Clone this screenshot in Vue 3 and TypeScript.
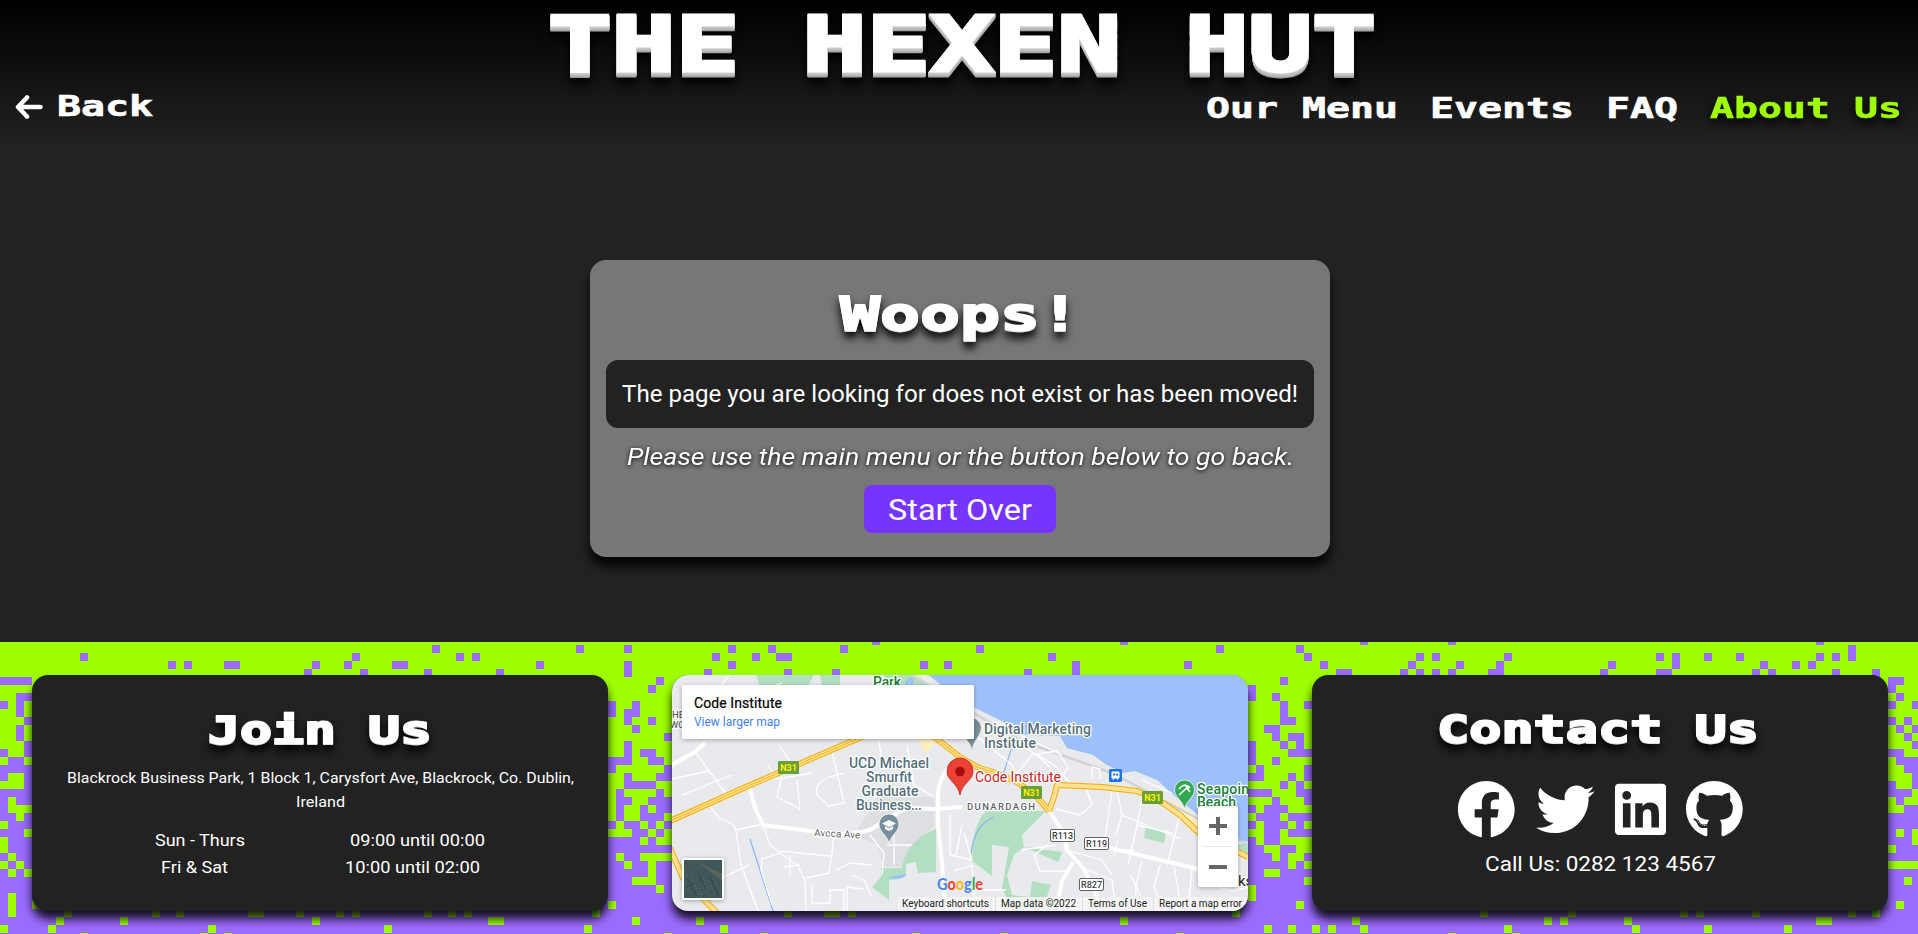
<script setup lang="ts">
import { h, type FunctionalComponent } from 'vue'

interface FitProps {
  text: string
  w: number
  size: number
  line: number
  base: number
}

// One line of text fitted to a fixed advance width.
const FitText: FunctionalComponent<FitProps> = (props) =>
  h('svg', { width: props.w, height: props.line, overflow: 'visible' }, [
    h(
      'text',
      {
        x: 0,
        y: props.base,
        'font-size': props.size,
        textLength: props.w,
        lengthAdjust: 'spacingAndGlyphs',
        'xml:space': 'preserve',
      },
      props.text,
    ),
  ])
FitText.props = ['text', 'w', 'size', 'line', 'base']

const nav = [
  { label: 'Our Menu', active: false },
  { label: 'Events', active: false },
  { label: 'FAQ', active: false },
  { label: 'About Us', active: true },
]

const CELL = 8

interface Cell {
  x: number
  y: number
  lime: boolean
}

const cells: Cell[] = []

function put(row: number, x: number, lime: boolean) {
  cells.push({ x, y: row * CELL - 5, lime })
}

// Scattered single cells along the top (violet) and the bottom (lime).
const top: Record<number, number[]> = {
  0: [872, 1120, 1360, 1448, 1816],
  1: [432, 576, 624, 728, 768, 840, 976, 1216, 1296, 1848],
  2: [80, 352, 456, 472, 712, 752, 776, 784, 1048, 1304, 1416, 1432, 1504, 1656, 1672, 1704, 1736, 1816, 1832, 1848],
  3: [168, 184, 224, 232, 312, 344, 392, 400, 536, 624, 728, 920, 944, 1072, 1184, 1320, 1408, 1456, 1496, 1608, 1672, 1760, 1792, 1808],
  4: [304, 360, 424, 496, 624, 704, 784, 832, 1024, 1072, 1336, 1344, 1400, 1416, 1432, 1448, 1488, 1496, 1600, 1656, 1664, 1752, 1768, 1832, 1872],
}
const bottom: Record<number, number[]> = {
  33: [32],
  34: [64, 152, 176, 248, 256, 296, 336, 352, 424, 448, 464, 592, 784, 824, 832, 848, 1232, 1480, 1568, 1680, 1696, 1752, 1848, 1872],
  35: [56, 120, 312, 488, 496, 632, 696, 1120, 1352, 1544, 1560, 1624, 1816, 1824],
  36: [48, 208, 384, 584, 720, 1312, 1328, 1360, 1504, 1632, 1704, 1784],
  37: [80, 200, 224, 664, 760, 912, 1000, 1176, 1448, 1512],
}
for (const [r, xs] of Object.entries(top)) xs.forEach((x) => put(+r, x, false))
for (const [r, xs] of Object.entries(bottom)) xs.forEach((x) => put(+r, x, true))

// Dense strips between the cards: '#' violet, '.' lime, first row is row 5.
const strips: { x: number; rows: string[] }[] = [
  {
    x: 0,
    rows: [
      '####', '....', '..##', '#.#.', '..#.', '...#', '..#.', '..#.', '...#', '#..#',
      '.##.', '####', '#..#', '...#', '####', '#.##', '#...', '##.#', '.###', '###.',
      '.###', '.###', '#.##', '.#.#', '#.#.', '####', '####', '#.##', '#.##', '#.##',
      '####', '.###', '####',
    ],
  },
  {
    x: 608,
    rows: [
      '......#.', '.....#..', '........', '#..#....', '#.##....', '..#..#..', '...#....', '.......#', '..#.....', '..#.##..',
      '###..##.', '#......#', '..#...##', '..####..', '.#....#.', '.##..###', '.#..#.##', '.#..###.', '#.##.#.#', '...##.#.',
      '####.#..', '########', '#.##....', '##.##.##', '#####.##', '###...##', '######.#', '########', '.#######', '########',
      '###.####', '########', '#######.',
    ],
  },
  {
    x: 1248,
    rows: [
      '....#...', '#.......', '#..#....', '....#..#', '....#...', '....##..', '..##....', '...#.##.', '#...#.#.', '#....###',
      '#..#....', '.#.....#', '##...#.#', '....#.#.', '###...##', '...#...#', '#.###...', '.###.###', '#.###.#.', '..##.###',
      '#.##....', '##..##..', '###.#..#', '#####.#.', '##..####', '#######.', '.#######', '.#######', '######.#', '########',
      '########', '##.##.##', '########',
    ],
  },
  {
    x: 1888,
    rows: [
      '##..', '#...', '.#..', '#..#', '....', '#.#.', '.#.#', '..#.', '...#', '##..',
      '.###', '..##', '...#', '#..#', '###.', '.#..', '..##', '####', '####', '#.#.',
      '###.', '.###', '####', '....', '####', '##.#', '####', '####', '#.##', '####',
      '####', '####', '####',
    ],
  },
]
for (const strip of strips) {
  strip.rows.forEach((row, r) => {
    ;[...row].forEach((ch, c) => put(r + 5, strip.x + c * CELL, ch === '.'))
  })
}

const hours = [
  { days: 'Sun - Thurs', dw: 90, time: '09:00 until 00:00', tw: 135 },
  { days: 'Fri & Sat', dw: 67, time: '10:00 until 02:00', tw: 135 },
]

const socials = [
  {
    name: 'Facebook',
    box: 512,
    d: 'M504 256C504 119 393 8 256 8S8 119 8 256c0 123.78 90.69 226.38 209.25 245V327.69h-63V256h63v-54.64c0-62.15 37-96.48 93.67-96.48 27.14 0 55.52 4.84 55.52 4.84v61h-31.28c-30.8 0-40.41 19.12-40.41 38.73V256h68.78l-11 71.69h-57.78V501C413.31 482.38 504 379.78 504 256z',
  },
  {
    name: 'Twitter',
    box: 512,
    d: 'M459.37 151.716c.325 4.548.325 9.097.325 13.645 0 138.72-105.583 298.558-298.558 298.558-59.452 0-114.68-17.219-161.137-47.106 8.447.974 16.568 1.299 25.34 1.299 49.055 0 94.213-16.568 130.274-44.832-46.132-.975-84.792-31.188-98.112-72.772 6.498.974 12.995 1.624 19.818 1.624 9.421 0 18.843-1.3 27.614-3.573-48.081-9.747-84.143-51.98-84.143-102.985v-1.299c13.969 7.797 30.214 12.67 47.431 13.319-28.264-18.843-46.781-51.005-46.781-87.391 0-19.492 5.197-37.36 14.294-52.954 51.655 63.675 129.3 105.258 216.365 109.807-1.624-7.797-2.599-15.918-2.599-24.04 0-57.828 46.782-104.934 104.934-104.934 30.213 0 57.502 12.67 76.67 33.137 23.715-4.548 46.456-13.32 66.599-25.34-7.798 24.366-24.366 44.833-46.132 57.827 21.117-2.273 41.584-8.122 60.426-16.243-14.292 20.791-32.161 39.308-52.628 54.253z',
  },
  {
    name: 'LinkedIn',
    box: 448,
    d: 'M416 32H31.9C14.3 32 0 46.5 0 64.3v383.4C0 465.5 14.3 480 31.9 480H416c17.6 0 32-14.5 32-32.3V64.3c0-17.8-14.4-32.3-32-32.3zM135.4 416H69V202.2h66.5V416zm-33.2-243c-21.3 0-38.5-17.3-38.5-38.5S80.9 96 102.2 96c21.2 0 38.5 17.3 38.5 38.5 0 21.3-17.2 38.5-38.5 38.5zm282.1 243h-66.4V312c0-24.8-.5-56.7-34.5-56.7-34.6 0-39.9 27-39.9 54.9V416h-66.4V202.2h63.7v29.2h.9c8.9-16.8 30.6-34.5 62.9-34.5 67.2 0 79.7 44.3 79.7 101.9V416z',
  },
  {
    name: 'GitHub',
    box: 496,
    d: 'M165.9 397.4c0 2-2.3 3.6-5.2 3.6-3.3.3-5.6-1.3-5.6-3.6 0-2 2.3-3.6 5.2-3.6 3-.3 5.6 1.3 5.6 3.6zm-31.1-4.5c-.7 2 1.3 4.3 4.3 4.9 2.6 1 5.6 0 6.2-2s-1.3-4.3-4.3-5.2c-2.6-.7-5.5.3-6.2 2.3zm44.2-1.7c-2.9.7-4.9 2.6-4.6 4.9.3 2 2.9 3.3 5.9 2.6 2.9-.7 4.9-2.6 4.6-4.6-.3-1.9-3-3.2-5.9-2.9zM244.8 8C106.1 8 0 113.3 0 252c0 110.9 69.8 205.8 169.5 239.2 12.8 2.3 17.3-5.6 17.3-12.1 0-6.2-.3-40.4-.3-61.4 0 0-70 15-84.7-29.8 0 0-11.4-29.1-27.8-36.6 0 0-22.9-15.7 1.6-15.4 0 0 24.9 2 38.6 25.8 21.9 38.6 58.6 27.5 72.9 20.9 2.3-16 8.8-27.1 16-33.7-55.9-6.2-112.3-14.3-112.3-110.5 0-27.5 7.6-41.3 23.6-58.9-2.6-6.5-11.1-33.3 2.6-67.9 20.9-6.5 69 27 69 27 20-5.6 41.5-8.5 62.8-8.5s42.8 2.9 62.8 8.5c0 0 48.1-33.6 69-27 13.7 34.7 5.2 61.4 2.6 67.9 16 17.7 25.8 31.5 25.8 58.9 0 96.5-58.9 104.2-114.8 110.5 9.2 7.9 17 22.9 17 46.4 0 33.7-.3 75.4-.3 83.6 0 6.5 4.6 14.4 17.3 12.1C428.2 457.8 496 362.9 496 252 496 113.3 383.5 8 244.8 8zM97.2 352.9c-1.3 1-1 3.3.7 5.2 1.6 1.6 3.9 2.3 5.2 1 1.3-1 1-3.3-.7-5.2-1.6-1.6-3.9-2.3-5.2-1zm-10.8-8.1c-.7 1.3.3 2.9 2.3 3.9 1.6 1 3.6.7 4.3-.7.7-1.3-.3-2.9-2.3-3.9-2-.6-3.6-.3-4.3.7zm32.4 35.6c-1.6 1.3-1 4.3 1.3 6.2 2.3 2.3 5.2 2.6 6.5 1 1.3-1.3.7-4.3-1.3-6.2-2.2-2.3-5.2-2.6-6.5-1zm-11.4-14.7c-1.6 1-1.6 3.6 0 5.9 1.6 2.3 4.3 3.3 5.6 2.3 1.6-1.3 1.6-3.9 0-6.2-1.4-2.3-4-3.3-5.6-2z',
  },
]

const trunkRoads = [
  'M-2 146L76 111L185 64L220 50L250 54L265 64L288 82L305 92L321 97L345 107L365 122L377 136',
  'M377 136L382 122L385 110L430 112L465 116L491 128L508 140L526 157L576 182',
  'M-2 173L11 203L45 238',
]
const mainRoads = [
  'M77 110L83 133L91 150L138 156L168 159L190 157L200 154L218 142L235 133L265 134L290 132',
  'M288 80Q266 100 266 120V150Q271 190 273 238',
  'M-2 91L23 77L33 68',
  'M378 137L391 157L395 175L411 193L423 215L427 238',
  'M401 187L390 206L386 226',
  'M438 173L526 194L576 205',
]
const minorRoads = [
  'M23 77L55 120', 'M33 125L47 143L62 150L64 155L91 149', 'M64 155L69 190L86 236',
  'M91 150L98 170L108 178L125 190L133 205L134 236', 'M108 176L158 181', 'M162 158L160 178L157 198L134 203',
  'M52 202L77 190', 'M57 0L48 12', 'M108 178L90 184L89 195L100 230', 'M160 76L172 128L157 131L145 120Q142 108 157 102L172 98',
  'M107 70L120 90', 'M125 105L128 134L105 122L110 100', 'M207 66L210 88', 'M235 70L242 110L262 122',
  'M118 180V200M112 192L128 190', 'M140 210V228H158V215H172V236', 'M165 195L178 188L200 190', 'M175 236V212L192 214',
  'M180 200L192 205L200 222', 'M198 160L212 178L210 200', 'M222 150V190M215 170H240', 'M278 140V180L300 185L292 158',
  'M303 60L340 90L350 108', 'M312 52L352 72L382 90L398 108', 'M345 98L360 80L385 76L396 92L388 106', 'M340 56L390 80',
  'M362 78L378 92', 'M440 114L432 172', 'M414 113L420 130L408 140L384 134', 'M445 116L450 140L444 160',
  'M471 118L465 150L456 190', 'M450 140L508 164', 'M508 140L495 190', 'M465 150L500 158', 'M446 165L442 180M450 175H462',
  'M470 186L464 210L474 236', 'M488 190L482 212L492 236', 'M458 200Q470 215 458 236', 'M502 192L510 236', 'M520 194L516 236',
  'M395 175L430 185L440 200', 'M411 193L440 205L444 236', 'M350 175L384 170', 'M290 150L284 180', 'M282 196L300 190L302 224',
  'M300 215H334', 'M420 104V92L428 94V104', 'M376 170L362 180L368 196L398 196', 'M526 206L560 216L576 212', 'M470 105L500 118',
  'M60 12L90 16L110 8', 'M0 104L36 96M10 120L60 100', 'M96 90L105 104L140 98',
]
const badges = [
  { x: 106, y: 86, t: 'N31' },
  { x: 349, y: 111, t: 'N31' },
  { x: 470, y: 116, t: 'N31' },
]
const regional = [
  { x: 378, y: 154, t: 'R113' },
  { x: 412, y: 162, t: 'R119' },
  { x: 407, y: 203, t: 'R827' },
]
</script>

<template>
  <div class="page">
    <header class="header">
      <h1 class="title"><FitText class="px px-title" text="THE HEXEN HUT" :w="828" :size="76" :line="80" :base="70.500" /></h1>
      <div class="bar">
        <a class="back">
          <svg width="30" height="26" viewBox="0 0 30 26"><path d="M12 3.5L3 13L12 22.5M3.500 13H25.500" /></svg>
          <FitText class="px" text="Back" :w="96" :size="27.500" :line="28" :base="22" />
        </a>
        <nav class="nav">
          <FitText
            v-for="item in nav"
            :key="item.label"
            class="px px-nav"
            :class="{ active: item.active }"
            :text="item.label"
            :w="item.label.length * 24"
            :size="27.500"
            :line="28"
            :base="22"
          />
        </nav>
      </div>
    </header>

    <main class="main">
      <section class="notice">
        <FitText class="px px-head woops" text="Woops!" :w="240" :size="46" :line="52" :base="39.500" />
        <div class="message">
          <FitText text="The page you are looking for does not exist or has been moved!" :w="676" :size="23.500" :line="36" :base="26" />
        </div>
        <FitText class="hint" text="Please use the main menu or the button below to go back." :w="667" :size="24.500" :line="36" :base="26" />
        <button class="button"><FitText text="Start Over" :w="144" :size="29.500" :line="36" :base="29" /></button>
      </section>
    </main>

    <footer class="footer">
      <svg class="pixels" width="1918" height="292" shape-rendering="crispEdges">
        <rect width="1918" height="292" fill="#9fff00" />
        <rect y="187" width="1918" height="105" fill="#9b6bff" />
        <rect v-for="(c, i) in cells" :key="i" :x="c.x" :y="c.y" width="8" height="8" :fill="c.lime ? '#9fff00' : '#9b6bff'" />
      </svg>

      <section class="card join">
        <FitText class="px px-head" text="Join Us" :w="224" :size="37" :line="40" :base="33.500" />
        <div class="address">
          <FitText text="Blackrock Business Park, 1 Block 1, Carysfort Ave, Blackrock, Co. Dublin," :w="507" :size="15" :line="24" :base="17" />
          <FitText text="Ireland" :w="49" :size="15" :line="24" :base="17" />
        </div>
        <div class="hours">
          <div v-for="row in hours" :key="row.days" class="hour-row">
            <FitText :text="row.days" :w="row.dw" :size="17" :line="27" :base="19" />
            <FitText :text="row.time" :w="row.tw" :size="17" :line="27" :base="19" />
          </div>
        </div>
      </section>

      <section class="card map">
        <svg width="576" height="236" viewBox="0 0 576 236">
          <rect width="576" height="236" fill="#e8eaed" />
          <path d="M206 122H262V150L232 192L212 192L205 170L182 160Z" fill="#dedfe3" />
          <path d="M84 0H142L136 11H88ZM148 0H168V10H150ZM212 0H242L276 22L250 12L215 12Z" fill="#b2dfc1" />
          <path d="M245 64H266L254 79ZM272 44L312 50L300 72Z" fill="#feefc3" />
          <path d="M255 -1C275 14 288 26 303 33L338 50L350 60L388 61L395 73L421 80L435 90L451 98L463 96L485 105L505 123L526 140L555 163L577 167V-1Z" fill="#9cc0f9" />
          <path d="M236 13Q232 5 240 4Q240 11 236 13" fill="none" stroke="#9cc0f9" stroke-width="3" />
          <path d="M264 154V197L246 198L244 187L234 189V199L228 204L217 205V225L200 212L209 202V193H230Q234 166 264 154Z" fill="#b2dfc1" />
          <path d="M314 136L374 136L350 160L352 172L390 177L386 187L352 172L342 180L335 200L340 220L358 222L360 206L379 210L374 224L388 227V236H342L330 214L337 172L320 170V201L300 186Q300 150 314 136Z" fill="#b2dfc1" />
          <path d="M474 150L494 156L492 168L472 163ZM560 169H576V184L564 177Z" fill="#b2dfc1" />
          <path d="M498 124L532 146L528 156L512 142Z" fill="#feefc3" />
          <path d="M78 164L101 236M344 50L339 75L331 100M322 142Q302 150 299 179M217 203L234 200" fill="none" stroke="#8ab4f8" stroke-width="1.200" />
          <path d="M218 203Q226 198 234 201Q228 205 218 203Z" fill="#9cc0f9" />
          <path d="M240 0L300 37L350 66L440 98L500 130L576 170" fill="none" stroke="#d0d2d6" stroke-width="2.500" />
          <path v-for="d in minorRoads" :key="d" :d="d" class="minor" />
          <path v-for="d in mainRoads" :key="d" :d="d" class="major" />
          <path v-for="d in trunkRoads" :key="d" :d="d" class="trunk-edge" />
          <path v-for="d in trunkRoads" :key="d" :d="d" class="trunk" />
          <path :d="trunkRoads[0]" class="trunk-line" />

          <g v-for="b in badges" :key="b.x">
            <rect :x="b.x" :y="b.y" width="21" height="13" rx="1.500" fill="#689f38" />
            <text :x="b.x + 10.5" :y="b.y + 10" text-anchor="middle" class="n-road">{{ b.t }}</text>
          </g>
          <g v-for="b in regional" :key="b.x">
            <rect :x="b.x + 0.5" :y="b.y + 0.5" width="24" height="12" rx="1.500" fill="#fff" stroke="#5f6368" />
            <text :x="b.x + 12.5" :y="b.y + 10" text-anchor="middle" class="r-road">{{ b.t }}</text>
          </g>

          <g class="label">
            <text x="0" y="43" class="small">HE</text>
            <text x="-2" y="53" class="small">WO</text>
            <text x="201" y="11.500" class="green" textLength="28">Park</text>
            <g text-anchor="middle" class="slate">
              <text x="217" y="93" textLength="80">UCD Michael</text>
              <text x="217" y="107" textLength="46">Smurfit</text>
              <text x="218" y="121" textLength="57">Graduate</text>
              <text x="217" y="135" textLength="66">Business...</text>
            </g>
            <text x="312" y="58.500" class="slate" textLength="107">Digital Marketing</text>
            <text x="312" y="72.500" class="slate" textLength="52">Institute</text>
            <text x="303" y="107" class="red" textLength="86">Code Institute</text>
            <text x="295" y="134.500" class="small" textLength="68">DUNARDAGH</text>
            <text x="142" y="161" class="road" textLength="46" transform="rotate(3 142 161)">Avoca Ave</text>
            <text x="525" y="118.500" class="green" textLength="52">Seapoin</text>
            <text x="525" y="132" class="green" textLength="39">Beach</text>
            <text x="566" y="211" class="dark">ks</text>
          </g>

          <path d="M300 74C298 66 289 60 289 53A10 10 0 0 1 309 53C309 60 301 66 300 74Z" fill="#78909c" />
          <path d="M217 168C215 160 207 157 207 149A10 10 0 0 1 227 149C227 157 219 160 217 168Z" fill="#78909c" stroke="#fff" stroke-width=".7" />
          <path d="M210 148.500L217 145L224 148.500L217 152ZM213 151V154L217 156L221 154V151L217 153ZM223 149V154" fill="#fff" />
          <path d="M288 120C286 108 275 106 275 96A13 13 0 0 1 301 96C301 106 290 108 288 120Z" fill="#ea4335" stroke="#c5221f" stroke-width=".8" />
          <circle cx="288" cy="96.500" r="4.800" fill="#a50e0e" />
          <path d="M512.500 134C511 126 502.500 122 502.500 115A10 10 0 0 1 522.500 115C522.500 122 514 126 512.500 134Z" fill="#34a853" stroke="#fff" stroke-width=".7" />
          <path d="M507 114Q512 107 518 113M507 120L517 111M513 110L518 117" fill="none" stroke="#fff" stroke-width="1.500" />
          <rect x="437" y="94" width="13" height="13" rx="1.500" fill="#1a73e8" />
          <path d="M440 97H447V103H440ZM441 105L442 103M446 105L445 103" fill="#fff" stroke="#fff" />
          <path d="M441 98.500H443V100.500H441ZM444 98.500H446V100.500H444Z" fill="#1a73e8" />

          <rect x="10" y="183" width="42" height="42" rx="1.500" class="shadowed" fill="#fff" />
          <rect x="12" y="185" width="38" height="38" fill="#40575a" />
          <path d="M22 185L50 199V206L34 193Z" fill="#5a6657" />
          <path d="M14 199L24 216M18 196L27 220M24 202L30 221M30 200L38 222M36 205L44 221M13 208L20 221M42 204L49 219M13 216L32 203M24 221L47 207" fill="none" stroke="#5a7275" stroke-dasharray="1 2" />
          <path d="M16 204L25 221M27 199L34 214M38 202L47 222M15 212L30 205" fill="none" stroke="#293d3e" stroke-dasharray="2 1" />

          <rect x="10" y="10" width="292" height="54" rx="1.500" class="shadowed" fill="#fff" />
          <text x="22" y="33" class="place" textLength="88">Code Institute</text>
          <text x="22" y="51" class="link" textLength="86">View larger map</text>

          <rect x="526" y="131" width="40" height="81" rx="2" class="shadowed" fill="#fff" />
          <path d="M531 171.500H561" stroke="#e6e6e6" />
          <path d="M537 151H555M546 142V160M537 192H555" stroke="#666" stroke-width="4" />

          <path d="M226 222H576V236H226Z" fill="#f5f5f5" fill-opacity=".88" />
          <path d="M323.500 222V236M410.500 222V236M481.500 222V236" stroke="#dcdcdc" />
          <text x="230" y="232" class="terms" textLength="87">Keyboard shortcuts</text>
          <text x="329" y="232" class="terms" textLength="75">Map data ©2022</text>
          <text x="416" y="232" class="terms" textLength="59">Terms of Use</text>
          <text x="487" y="232" class="terms" textLength="83">Report a map error</text>
          <text x="265" y="215" class="google" textLength="46" lengthAdjust="spacingAndGlyphs"><tspan fill="#4285f4">G</tspan><tspan fill="#ea4335">o</tspan><tspan fill="#fbbc04">o</tspan><tspan fill="#4285f4">g</tspan><tspan fill="#34a853">l</tspan><tspan fill="#ea4335">e</tspan></text>
        </svg>
      </section>

      <section class="card contact">
        <FitText class="px px-head" text="Contact Us" :w="322" :size="37" :line="40" :base="33.500" />
        <div class="socials">
          <svg v-for="s in socials" :key="s.name" :width="(s.box * 58.600) / 512" height="58.600" :viewBox="`0 0 ${s.box} 512`" :aria-label="s.name">
            <path :d="s.d" />
          </svg>
        </div>
        <FitText text="Call Us: 0282 123 4567" :w="231" :size="20" :line="30" :base="21" />
      </section>
    </footer>
  </div>
</template>

<style>
body {
  background: #222;
  overflow: hidden;
}
</style>

<style scoped>
.page {
  width: 1918px;
  height: 934px;
  display: flex;
  flex-direction: column;
  overflow: hidden;
  background: #222;
  color: #fff;
  fill: currentColor;
  font-family: Roboto, "Open Sans", sans-serif;
}
.page svg {
  display: block;
  flex: none;
}
.px {
  font-family: "DejaVu Sans Mono", monospace;
  font-weight: 700;
  stroke: currentColor;
  stroke-width: 0.6px;
}
.header {
  height: 146px;
  background: linear-gradient(#000, #222);
}
.title {
  margin: 0;
  height: 92px;
  padding-left: 6px;
  display: flex;
  justify-content: center;
}
.px-title {
  stroke-width: 3px;
  filter: drop-shadow(0 1px 0 #ccc) drop-shadow(0 1px 0 #c4c4c4) drop-shadow(0 1px 0 #bbb) drop-shadow(0 1px 0 #b0b0b0) drop-shadow(0 1px 0 #999) drop-shadow(0 5px 5px #000);
}
.bar {
  display: flex;
  justify-content: space-between;
  padding: 2px 16px 0 15px;
}
.back {
  display: flex;
  gap: 12px;
}
.back path {
  fill: none;
  stroke: #fff;
  stroke-width: 4.5;
  stroke-linecap: round;
  stroke-linejoin: round;
}
.nav {
  display: flex;
  gap: 32px;
  padding-top: 2px;
}
.px-nav.active {
  color: #9fff00;
  fill: #9fff00;
  filter: drop-shadow(0 5px 5px #000);
}
.main {
  flex: 1;
  display: flex;
  flex-direction: column;
  align-items: center;
  padding: 114px 0 0 2px;
}
.notice {
  box-sizing: border-box;
  width: 740px;
  height: 297px;
  padding: 30px 16px 24px;
  display: flex;
  flex-direction: column;
  align-items: center;
  border-radius: 16px;
  background: #777;
  box-shadow: 0 10px 10px rgba(0, 0, 0, 0.85);
}
.px-head {
  stroke-width: 1.8px;
  filter: drop-shadow(0 1px 0 #ddd) drop-shadow(0 6px 4px rgba(0, 0, 0, 0.95));
}
.woops {
  margin-bottom: 18px;
}
.message {
  box-sizing: border-box;
  width: 708px;
  height: 68px;
  padding: 16px;
  margin-bottom: 11px;
  border-radius: 12px;
  background: #222;
}
.hint {
  font-style: italic;
  filter: drop-shadow(0 1px 2px #000);
  margin-bottom: 10px;
}
.button {
  width: 192px;
  height: 48px;
  padding: 4px 24px;
  border: 0;
  border-radius: 8px;
  background: #7535ff;
  color: #fff;
  font-family: inherit;
}
.footer {
  position: relative;
  height: 259px;
  padding: 33px 30px 0 32px;
  display: flex;
  justify-content: space-between;
  align-items: flex-start;
}
.pixels {
  position: absolute;
  top: 0;
  left: 0;
}
.card {
  position: relative;
  box-sizing: border-box;
  width: 576px;
  height: 236px;
  display: flex;
  flex-direction: column;
  align-items: center;
  border-radius: 16px;
  background: #222;
  box-shadow: 0 8px 10px rgba(0, 0, 0, 0.85);
}
.join {
  padding-top: 34px;
}
.address {
  display: flex;
  flex-direction: column;
  align-items: center;
  margin-top: 17px;
}
.hours {
  margin-top: 13px;
}
.hour-row {
  width: 436px;
  display: flex;
  justify-content: space-around;
}
.contact {
  padding-top: 33px;
}
.contact .px-head {
  margin-right: 4px;
}
.socials {
  display: flex;
  gap: 20px;
  margin: 32px 0 11px;
}
.map > svg {
  border-radius: 16px;
  overflow: hidden;
}
.minor,
.major,
.trunk,
.trunk-edge,
.trunk-line {
  fill: none;
  stroke: #fff;
  stroke-width: 1.3;
  stroke-linejoin: round;
}
.major {
  stroke-width: 4;
}
.trunk-edge {
  stroke: #f9ab00;
  stroke-width: 6;
}
.trunk {
  stroke: #fde293;
  stroke-width: 4;
}
.trunk-line {
  stroke: #f9ab00;
  stroke-width: 0.8;
}
.n-road {
  font-size: 9px;
  font-weight: 700;
  fill: #ffee00;
}
.r-road {
  font-size: 9px;
  font-weight: 500;
  fill: #3c4043;
}
.label text {
  font-size: 14px;
  paint-order: stroke;
  stroke: #fff;
  stroke-width: 2.5px;
  stroke-linejoin: round;
}
.label .slate,
.slate text {
  fill: #546e7a;
  font-weight: 500;
}
.label .green {
  fill: #188038;
  font-weight: 500;
}
.label .red {
  fill: #c5221f;
}
.label .small {
  font-size: 9.5px;
  fill: #5f6368;
  font-weight: 500;
}
.label .road {
  font-size: 10px;
  fill: #5f6368;
}
.label .dark {
  font-size: 15px;
  fill: #222;
}
.shadowed {
  filter: drop-shadow(0 1px 2px rgba(0, 0, 0, 0.3));
}
.place {
  font-size: 14px;
  fill: #000;
  stroke: #000;
  stroke-width: 0.2px;
}
.link {
  font-size: 12px;
  fill: #427fed;
}
.terms {
  font-size: 10px;
  fill: #222;
}
.google {
  font-size: 17px;
  font-family: Lato, sans-serif;
  font-weight: 700;
}
</style>
